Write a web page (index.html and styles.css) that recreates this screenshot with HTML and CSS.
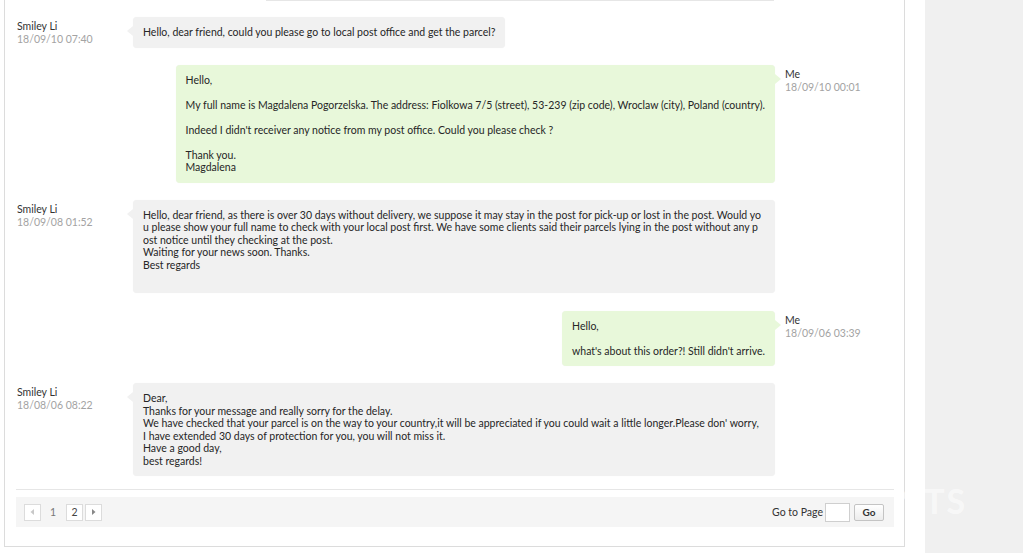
FILE: index.html
```html
<!DOCTYPE html>
<html lang="en">
<head>
<meta charset="utf-8">
<title>Messages</title>
<link rel="stylesheet" href="styles.css">
</head>
<body>
<div class="page">
  <main class="panel">
    <div class="thread">
      <div class="cut"></div>

      <div class="row row-in">
        <div class="meta"><div class="name">Smiley Li</div><div class="date">18/09/10 07:40</div></div>
        <div class="bubble in">Hello, dear friend, could you please go to local post office and get the parcel?</div>
      </div>

      <div class="row row-out">
        <div class="bubble out">Hello,<br><br>My full name is Magdalena Pogorzelska. The address: Fiolkowa 7/5 (street), 53-239 (zip code), Wroclaw (city), Poland (country).<br><br>Indeed I didn't receiver any notice from my post office. Could you please check ?<br><br>Thank you.<br>Magdalena</div>
        <div class="meta"><div class="name">Me</div><div class="date">18/09/10 00:01</div></div>
      </div>

      <div class="row row-in">
        <div class="meta"><div class="name">Smiley Li</div><div class="date">18/09/08 01:52</div></div>
        <div class="bubble in wide">Hello, dear friend, as there is over 30 days without delivery, we suppose it may stay in the post for pick-up or lost in the post. Would yo<br>u please show your full name to check with your local post first. We have some clients said their parcels lying in the post without any p<br>ost notice until they checking at the post.<br>Waiting for your news soon. Thanks.<br>Best regards<br><br></div>
      </div>

      <div class="row row-out row-spaced">
        <div class="bubble out">Hello,<br><br>what's about this order?! Still didn't arrive.</div>
        <div class="meta"><div class="name">Me</div><div class="date">18/09/06 03:39</div></div>
      </div>

      <div class="row row-in">
        <div class="meta"><div class="name">Smiley Li</div><div class="date">18/08/06 08:22</div></div>
        <div class="bubble in wide">Dear,<br>Thanks for your message and really sorry for the delay.<br>We have checked that your parcel is on the way to your country,it will be appreciated if you could wait a little longer.Please don' worry,<br>I have extended 30 days of protection for you, you will not miss it.<br>Have a good day,<br>best regards!</div>
      </div>
    </div>

    <div class="sep"></div>

    <div class="pager">
      <div class="pages">
        <span class="pbtn disabled"><svg width="5" height="6" viewBox="0 0 5 6"><path d="M4 0 L0.5 3 L4 6 Z" fill="#c8c8c8"/></svg></span>
        <span class="pcur">1</span>
        <span class="pbtn">2</span>
        <span class="pbtn"><svg width="5" height="6" viewBox="0 0 5 6"><path d="M1 0 L4.5 3 L1 6 Z" fill="#888"/></svg></span>
      </div>
      <div class="goto">
        <span class="goto-label">Go to Page</span>
        <span class="goto-input"></span>
        <span class="goto-btn">Go</span>
      </div>
    </div>
  </main>
  <aside class="side"></aside>
</div>
<div class="watermark">NTS</div>
</body>
</html>
```
FILE: styles.css
```css
html, body {
  margin: 0;
  padding: 0;
  background: #ffffff;
}
body {
  font-family: Lato, "Liberation Sans", sans-serif;
  font-size: 10.5px;
  color: #262626;
  width: 1023px;
  height: 553px;
  overflow: hidden;
  position: relative;
}
.page {
  display: flex;
  align-items: stretch;
  height: 553px;
}
.panel {
  margin-left: 4px;
  width: 901px;
  align-self: flex-start;
  border: 1px solid #dcdcdc;
  border-top: none;
  padding: 0 10px 19px 11px;
  box-sizing: border-box;
}
.side {
  margin-left: 20px;
  flex: 1;
  background: #f0f0f0;
}
.thread {
  display: flex;
  flex-direction: column;
  gap: 17px;
}
.cut {
  height: 1px;
  margin-left: 250px;
  width: 508px;
  background: #e6e6e6;
  margin-bottom: -1px;
}
.row {
  display: grid;
  grid-template-columns: 117px 642px 1fr;
  align-items: start;
}
.row-spaced { margin-top: 1px; }
.row-in .meta { grid-column: 1; }
.row-in .bubble { grid-column: 2; justify-self: start; }
.row-out .bubble { grid-column: 2; justify-self: end; }
.row-out .meta { grid-column: 3; padding-left: 10px; }
.meta {
  padding-top: 3px;
  padding-left: 1px;
  line-height: 13px;
}
.name { color: #333; }
.date { color: #a3a3a3; }
.bubble {
  position: relative;
  padding: 9px 10px;
  line-height: 12.5px;
  border-radius: 4px;
  box-shadow: 0 0 1px rgba(0, 0, 0, 0.06);
}
.bubble.in { background: #f1f1f1; }
.bubble.out { background: #e8f8da; }
.bubble.wide {
  width: 622px;
  white-space: nowrap;
}
.bubble.in::before,
.bubble.out::after {
  content: "";
  position: absolute;
  top: 9px;
  width: 0;
  height: 0;
  border-top: 5px solid transparent;
  border-bottom: 5px solid transparent;
}
.bubble.in::before {
  left: -6px;
  border-right: 6px solid #f1f1f1;
}
.bubble.out::after {
  right: -6px;
  border-left: 6px solid #e8f8da;
}
.sep {
  margin-top: 13px;
  height: 1px;
  background: #e6e6e6;
}
.pager {
  margin-top: 7px;
  height: 30px;
  background: #f5f5f5;
  display: flex;
  align-items: center;
  justify-content: space-between;
  padding: 0 10px 0 8px;
}
.pages {
  display: flex;
  align-items: center;
  gap: 2px;
}
.pbtn {
  box-sizing: border-box;
  width: 17px;
  height: 17px;
  border: 1px solid #dcdcdc;
  background: #fff;
  display: flex;
  align-items: center;
  justify-content: center;
  color: #444;
  font-size: 10.5px;
}
.pcur {
  width: 20px;
  text-align: center;
  color: #777;
  font-size: 10.5px;
  margin-right: 1px;
}
.goto {
  display: flex;
  align-items: center;
}
.goto-label {
  color: #333;
  margin-right: 2px;
}
.goto-input {
  box-sizing: border-box;
  width: 25px;
  height: 19px;
  border: 1px solid #cfcfcf;
  background: #fff;
  margin-right: 4px;
}
.goto-btn {
  box-sizing: border-box;
  width: 30px;
  height: 17px;
  border: 1px solid #c4c4c4;
  border-radius: 2px;
  background: linear-gradient(#ffffff, #ececec);
  font-weight: bold;
  font-size: 10px;
  color: #333;
  display: flex;
  align-items: center;
  justify-content: center;
}
.watermark {
  position: absolute;
  left: 896px;
  top: 484px;
  font-family: Lato, "Liberation Sans", sans-serif;
  font-size: 34px;
  font-weight: bold;
  letter-spacing: 2px;
  line-height: 34px;
  color: rgba(255, 255, 255, 0.55);
  pointer-events: none;
}
```
